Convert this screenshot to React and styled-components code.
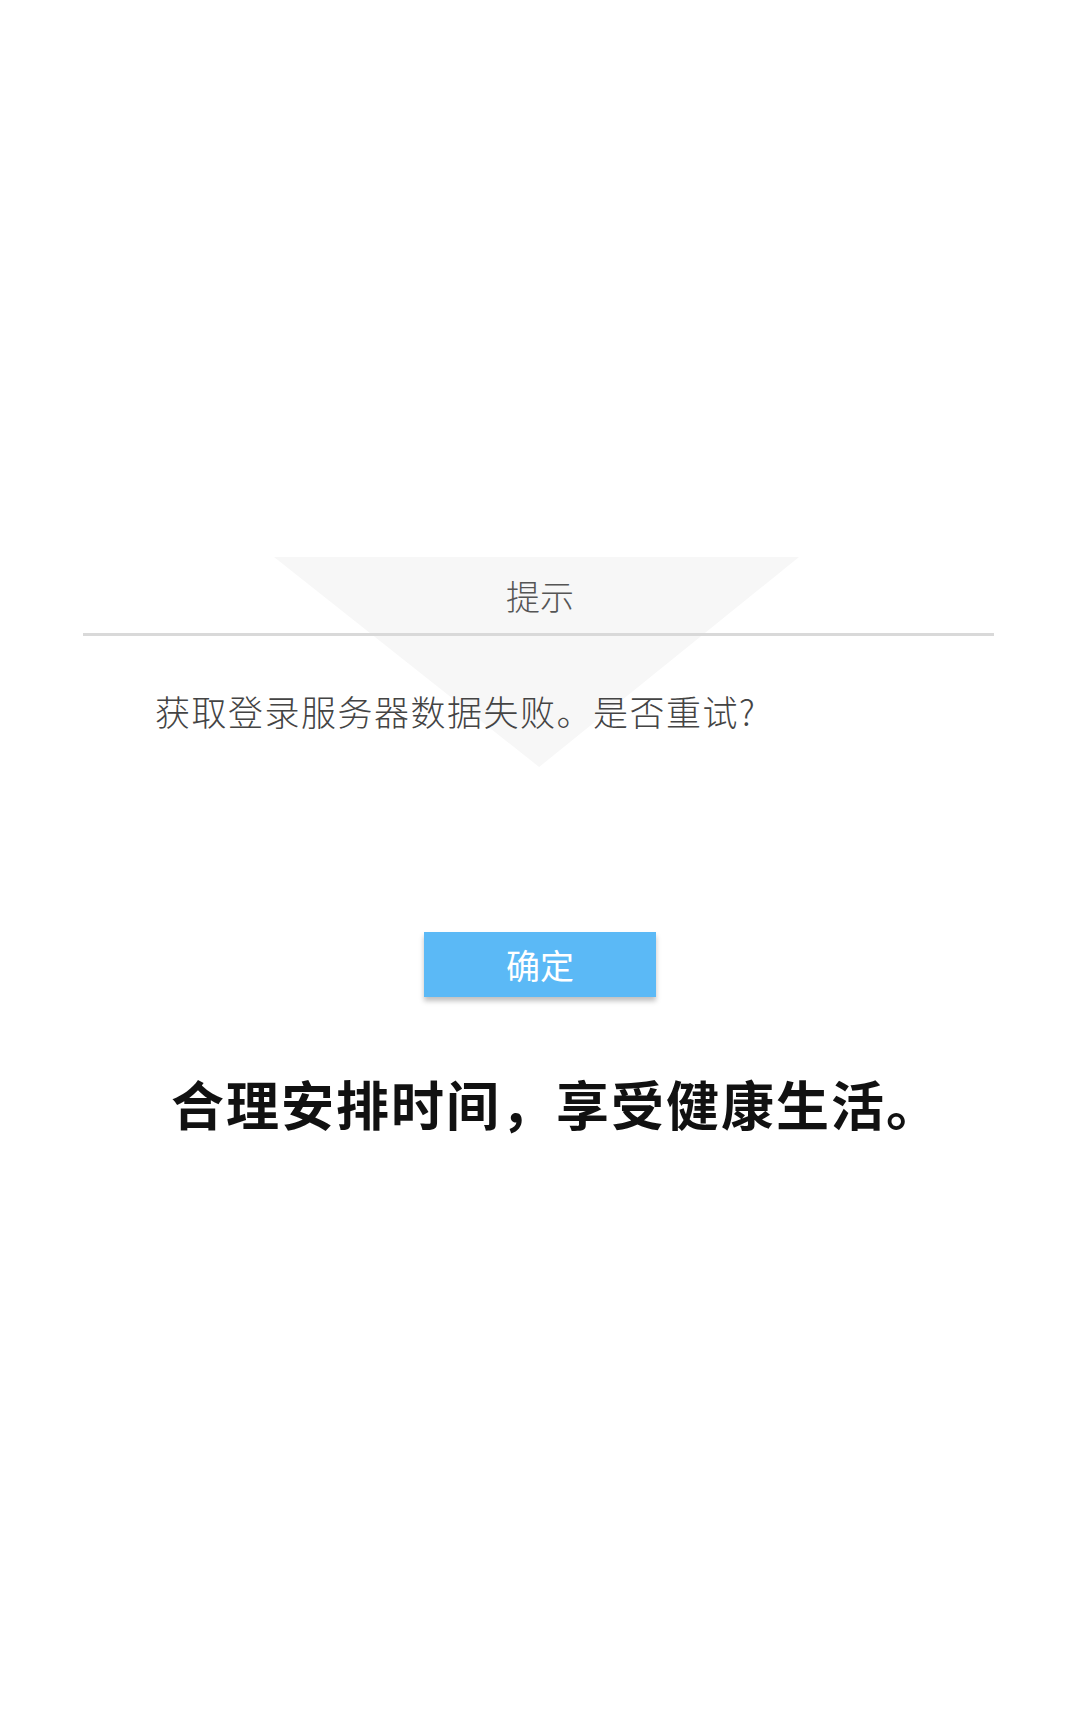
import React from 'react';
import styled, { createGlobalStyle } from 'styled-components';

const GlobalStyle = createGlobalStyle`
  html, body {
    margin: 0;
    padding: 0;
    background: #fff;
  }
  body {
    font-family: "Noto Sans CJK SC", "Noto Sans", sans-serif;
  }
`;

const Page = styled.div`
  width: 1080px;
  height: 1728px;
  padding-top: 557px;
  box-sizing: border-box;
  display: flex;
  flex-direction: column;
`;

const Dialog = styled.div`
  position: relative;

  &::before {
    content: '';
    position: absolute;
    top: 0;
    left: 274px;
    width: 525px;
    height: 210px;
    background: #f7f7f7;
    clip-path: polygon(0 0, 100% 0, 50.5% 100%);
    z-index: 0;
  }
`;

const Title = styled.div`
  position: relative;
  height: 76px;
  display: flex;
  align-items: center;
  justify-content: center;
  font-size: 34px;
  font-weight: 300;
  color: #555;
`;

const Divider = styled.div`
  position: relative;
  height: 3px;
  margin: 0 86px 0 83px;
  background: #d9d9d9;
`;

const Message = styled.p`
  position: relative;
  margin: 51px 0 0;
  padding-left: 155px;
  font-size: 35px;
  font-weight: 300;
  line-height: 48px;
  letter-spacing: 1.5px;
  color: #444;
`;

const Button = styled.button`
  margin: 197px 0 0 424px;
  width: 232px;
  height: 65px;
  border: none;
  background: #5bb9f6;
  color: #fff;
  font-family: inherit;
  font-size: 34px;
  box-shadow: 0 4px 5px rgba(0, 0, 0, 0.25);
  cursor: pointer;
`;

const Slogan = styled.h2`
  margin: 74px 0 0;
  padding-left: 32px;
  text-align: center;
  font-size: 53px;
  line-height: 64px;
  letter-spacing: 2px;
  font-weight: 700;
  color: #111;
`;

export default function App() {
  return (
    <>
      <GlobalStyle />
      <Page>
        <Dialog>
          <Title>提示</Title>
          <Divider />
          <Message>获取登录服务器数据失败。是否重试?</Message>
        </Dialog>
        <Button>确定</Button>
        <Slogan>合理安排时间，享受健康生活。</Slogan>
      </Page>
    </>
  );
}
